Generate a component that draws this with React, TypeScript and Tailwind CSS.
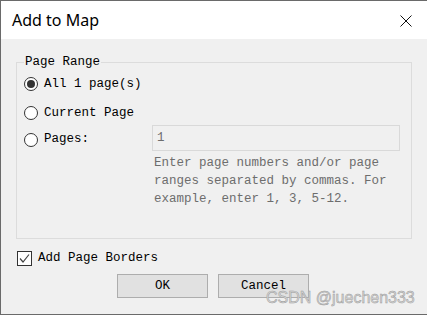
import React, { useState } from 'react'

const mono = { fontFamily: '"Liberation Mono", "DejaVu Sans Mono", monospace' }

const Radio: React.FC<{ checked: boolean; onClick: () => void }> = ({ checked, onClick }) => (
  <span
    onClick={onClick}
    className="flex h-[14px] w-[14px] shrink-0 items-center justify-center rounded-full border border-[#333333] bg-white"
  >
    {checked && <span className="h-[8px] w-[8px] rounded-full bg-[#333333]" />}
  </span>
)

const App: React.FC = () => {
  const [range, setRange] = useState<'all' | 'current' | 'pages'>('all')
  const [borders, setBorders] = useState(true)

  return (
    <div className="relative h-[316px] w-[427px] overflow-hidden bg-white">
      <div className="flex h-[315px] w-[428px] flex-col border-t border-b border-l border-[#6a6a6a] bg-[#f0f0f0]">
        {/* Title bar */}
        <div className="flex h-[38px] shrink-0 items-center justify-between bg-white pl-[11px] pr-[15px]">
          <span className="text-[16px] text-black" style={{ fontFamily: '"Noto Sans", sans-serif' }}>
            Add to Map
          </span>
          <svg width="12" height="12" viewBox="0 0 12 12" className="mr-[1px] mt-[1px]">
            <path d="M0.5 0.5 L11.5 11.5 M11.5 0.5 L0.5 11.5" stroke="#111" strokeWidth="1" />
          </svg>
        </div>

        {/* Body */}
        <div className="flex flex-col px-[15px] text-[12.5px] text-black" style={mono}>
          <fieldset className="mt-[15px] h-[185px] w-[396px] border border-[#dcdcdc] pl-[7px] pr-[11px]">
            <legend className="px-[1px] leading-[16px]">Page Range</legend>

            <div className="mt-[2px] flex h-[24px] items-center gap-[6px]">
              <Radio checked={range === 'all'} onClick={() => setRange('all')} />
              <span>All 1 page(s)</span>
            </div>
            <div className="mt-[5px] flex h-[24px] items-center gap-[6px]">
              <Radio checked={range === 'current'} onClick={() => setRange('current')} />
              <span>Current Page</span>
            </div>
            <div className="flex h-[26px] items-center">
              <div className="flex w-[128px] items-center gap-[6px] pt-[3px]">
                <Radio checked={range === 'pages'} onClick={() => setRange('pages')} />
                <span>Pages:</span>
              </div>
              <div className="flex h-[26px] flex-1 items-center border border-[#d9d9d9] bg-[#f0f0f0] px-[4px] text-[#6d6d6d]">
                1
              </div>
            </div>
            <p className="ml-[130px] mt-[3px] leading-[18px] text-[#6d6d6d]">
              Enter page numbers and/or page ranges separated by commas. For example, enter 1, 3, 5-12.
            </p>
          </fieldset>

          <label className="mt-[11px] flex h-[16px] items-center gap-[6px] pl-[1px]" onClick={() => setBorders(!borders)}>
            <span className="flex h-[15px] w-[15px] items-center justify-center border border-[#333333] bg-white">
              {borders && (
                <svg width="13" height="13" viewBox="0 0 13 13">
                  <path d="M2 6.5 L5 10 L11 2.5" fill="none" stroke="#444" strokeWidth="1.2" />
                </svg>
              )}
            </span>
            <span>Add Page Borders</span>
          </label>

          <div className="mt-[8px] flex gap-[10px] pl-[101px]">
            <button className="h-[24px] w-[91px] border border-[#adadad] bg-[#e1e1e1]">OK</button>
            <button className="h-[24px] w-[91px] border border-[#adadad] bg-[#e1e1e1]">Cancel</button>
          </div>
        </div>
      </div>

      {/* Watermark */}
      <span
        className="absolute left-[266px] top-[288px] text-[16px] leading-[20px] text-[#d8d8d8]"
        style={{ fontFamily: '"Liberation Sans", sans-serif', WebkitTextStroke: '0.5px #9a9a9a' }}
      >
        CSDN @juechen333
      </span>
    </div>
  )
}

export default App
